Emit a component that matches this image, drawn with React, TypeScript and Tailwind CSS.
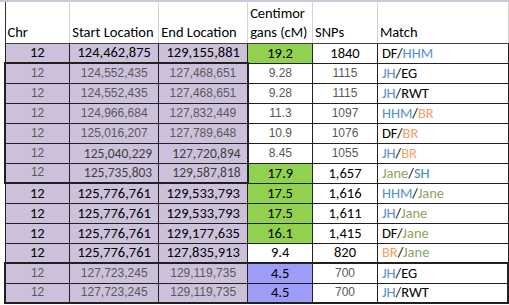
import React from "react";

type Cell = {
  t: React.ReactNode;
  f?: "c" | "a" | "g";
  bg?: string;
  al?: "l" | "c" | "r";
};

const CAL = "font-['Carlito','Lato',sans-serif] text-[14.5px] text-black";
const CALG = "font-['Carlito','Lato',sans-serif] text-[13.5px] text-[#3f3f3f]";
const ARI = "font-['Liberation_Sans',Arial,sans-serif] text-[12px] text-[#595959]";

const B = "text-[#558ed5]";
const O = "text-[#f4a064]";
const J = "text-[#8ea35c]";
const S = "text-[#3b8fb3]";

const purple = "bg-[#ccc0da]";
const green = "bg-[#92d050]";
const blue = "bg-[#9d9df7]";

function m(a: string, ac: string, b: string, bc: string) {
  return (
    <>
      <span className={ac}>{a}</span>/<span className={bc}>{b}</span>
    </>
  );
}

type Row = { cells: Cell[] };

const rows: Row[] = [
  { cells: [
    { t: "12", f: "c", bg: purple }, { t: "124,462,875", f: "c", bg: purple }, { t: "129,155,881", f: "c", bg: purple },
    { t: "19.2", f: "c", bg: green }, { t: "1840", f: "c" }, { t: m("DF", "", "HHM", B), f: "c", al: "l" } ] },
  { cells: [
    { t: "12", f: "a", bg: purple }, { t: "124,552,435", f: "a", bg: purple }, { t: "127,468,651", f: "a", bg: purple },
    { t: "9.28", f: "a" }, { t: "1115", f: "a" }, { t: m("JH", B, "EG", ""), f: "c", al: "l" } ] },
  { cells: [
    { t: "12", f: "a", bg: purple }, { t: "124,552,435", f: "a", bg: purple }, { t: "127,468,651", f: "a", bg: purple },
    { t: "9.28", f: "a" }, { t: "1115", f: "a" }, { t: m("JH", B, "RWT", ""), f: "c", al: "l" } ] },
  { cells: [
    { t: "12", f: "a", bg: purple }, { t: "124,966,684", f: "a", bg: purple }, { t: "127,832,449", f: "a", bg: purple },
    { t: "11.3", f: "a" }, { t: "1097", f: "a" }, { t: m("HHM", B, "BR", O), f: "c", al: "l" } ] },
  { cells: [
    { t: "12", f: "a", bg: purple }, { t: "125,016,207", f: "a", bg: purple }, { t: "127,789,648", f: "a", bg: purple },
    { t: "10.9", f: "a" }, { t: "1076", f: "a" }, { t: m("DF", "", "BR", O), f: "c", al: "l" } ] },
  { cells: [
    { t: "12", f: "a", bg: purple }, { t: "125,040,229", f: "g", bg: purple, al: "r" }, { t: "127,720,894", f: "g", bg: purple, al: "r" },
    { t: "8.45", f: "a" }, { t: "1055", f: "a" }, { t: m("JH", B, "BR", O), f: "c", al: "l" } ] },
  { cells: [
    { t: "12", f: "a", bg: purple }, { t: "125,735,803", f: "g", bg: purple, al: "r" }, { t: "129,587,818", f: "g", bg: purple, al: "r" },
    { t: "17.9", f: "c", bg: green }, { t: "1,657", f: "c" }, { t: m("Jane", J, "SH", S), f: "c", al: "l" } ] },
  { cells: [
    { t: "12", f: "c", bg: purple }, { t: "125,776,761", f: "c", bg: purple }, { t: "129,533,793", f: "c", bg: purple },
    { t: "17.5", f: "c", bg: green }, { t: "1,616", f: "c" }, { t: m("HHM", B, "Jane", J), f: "c", al: "l" } ] },
  { cells: [
    { t: "12", f: "c", bg: purple }, { t: "125,776,761", f: "c", bg: purple }, { t: "129,533,793", f: "c", bg: purple },
    { t: "17.5", f: "c", bg: green }, { t: "1,611", f: "c" }, { t: m("JH", B, "Jane", J), f: "c", al: "l" } ] },
  { cells: [
    { t: "12", f: "c", bg: purple }, { t: "125,776,761", f: "c", bg: purple }, { t: "129,177,635", f: "c", bg: purple },
    { t: "16.1", f: "c", bg: green }, { t: "1,415", f: "c" }, { t: m("DF", "", "Jane", J), f: "c", al: "l" } ] },
  { cells: [
    { t: "12", f: "c", bg: purple }, { t: "125,776,761", f: "c", bg: purple }, { t: "127,835,913", f: "c", bg: purple },
    { t: "9.4", f: "c" }, { t: "820", f: "c" }, { t: m("BR", O, "Jane", J), f: "c", al: "l" } ] },
  { cells: [
    { t: "12", f: "a", bg: purple }, { t: "127,723,245", f: "a", bg: purple }, { t: "129,119,735", f: "a", bg: purple },
    { t: "4.5", f: "c", bg: blue }, { t: "700", f: "a" }, { t: m("JH", B, "EG", ""), f: "c", al: "l" } ] },
  { cells: [
    { t: "12", f: "a", bg: purple }, { t: "127,723,245", f: "a", bg: purple }, { t: "129,119,735", f: "a", bg: purple },
    { t: "4.5", f: "c", bg: blue }, { t: "700", f: "a" }, { t: m("JH", B, "RWT", ""), f: "c", al: "l" } ] },
];

// thick outlines: rows 1-6 cols 0-2, rows 11-12 all columns
function thick(r: number, c: number) {
  const cls: string[] = [];
  if (r >= 1 && r <= 6 && c <= 2) {
    if (r === 1) cls.push("border-t-2");
    if (r === 6) cls.push("border-b-2");
    if (c === 0) cls.push("border-l-2");
    if (c === 2) cls.push("border-r-2");
  }
  if (r >= 11) {
    if (r === 11) cls.push("border-t-2");
    if (r === 12) cls.push("border-b-2");
    if (c === 0) cls.push("border-l-2");
    if (c === 5) cls.push("border-r-2");
  }
  return cls.join(" ");
}

const widths = ["w-[65px]", "w-[89px]", "w-[89px]", "w-[65px]", "w-[65px]", "w-[131px]"];

export default function App() {
  return (
    <div className="w-[509px] h-[305px] bg-white overflow-hidden border-t-2 border-[#c3cbd8]">
      <table className="ml-[4px] border-collapse table-fixed">
        <colgroup>
          {widths.map((w, i) => (
            <col key={i} className={w} />
          ))}
        </colgroup>
        <thead>
          <tr className="h-[41px]">
            {["Chr", "Start Location", "End Location", "Centimor gans (cM)", "SNPs", "Match"].map((h, i) => (
              <th
                key={i}
                className={`border-x border-[#d4d4d4] border-b border-b-[#404040] ${i === 0 ? "border-l-[#303030]" : ""} px-[2px] pb-[1px] align-bottom text-left font-normal leading-[19px] whitespace-nowrap overflow-hidden ${CAL}`}
              >
                {i === 3 ? (
                  <>
                    Centimor
                    <br />
                    gans (cM)
                  </>
                ) : (
                  h
                )}
              </th>
            ))}
          </tr>
        </thead>
        <tbody>
          {rows.map((row, r) => (
            <tr key={r} className="h-[20px]">
              {row.cells.map((c, ci) => {
                const al = c.al === "l" ? "text-left pl-[4px]" : c.al === "r" ? "text-right pr-[6px]" : "text-center";
                const font = c.f === "a" ? ARI : c.f === "g" ? CALG : CAL;
                return (
                  <td
                    key={ci}
                    className={`border border-[#202020] p-0 h-[20px] leading-[17px] whitespace-nowrap ${font} ${c.bg ?? "bg-white"} ${al} ${thick(r, ci)}`}
                  >
                    {c.t}
                  </td>
                );
              })}
            </tr>
          ))}
        </tbody>
      </table>
    </div>
  );
}
